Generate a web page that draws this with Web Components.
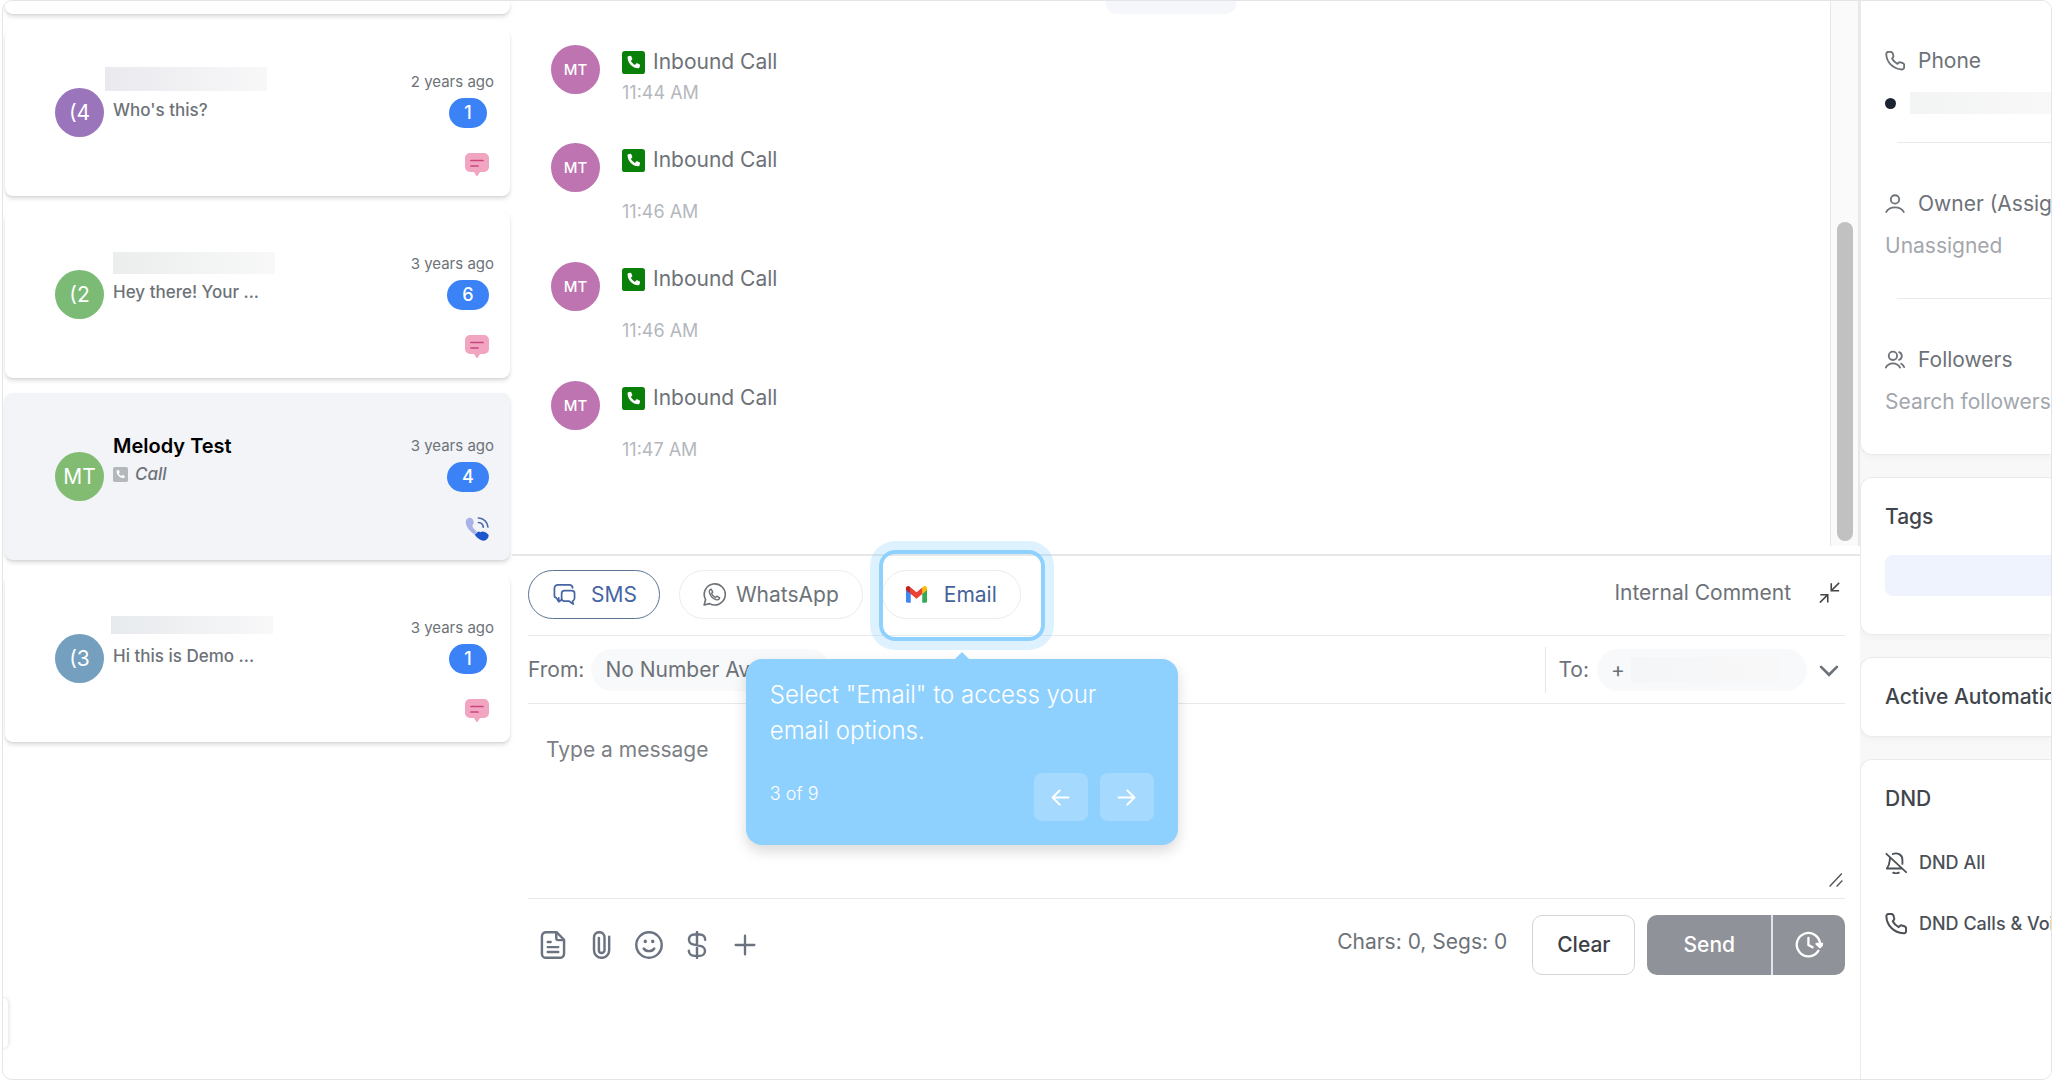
<!DOCTYPE html>
<html lang="en">
<head>
<meta charset="utf-8">
<title>Conversations</title>
<style>
  html, body {
    height: 100%;
    margin: 0;
  }

  body {
    background: #fff;
    color: #6d7278;
    font: 400 21px/28px Inter, "Liberation Sans", sans-serif;
    overflow: hidden;
  }
</style>
</head>
<body>

<inbox-shell>
  <conversation-list slot="list">
    <conversation-card blank></conversation-card>
    <conversation-card initials="(4" color="#9a75bb" age="2 years ago" count="1" channel="sms">
      <redacted-text slot="name" tint="#eae9ee" class="wide"></redacted-text>
      Who's this?
    </conversation-card>
    <conversation-card initials="(2" color="#7bbb76" age="3 years ago" count="6" channel="sms">
      <redacted-text slot="name" tint="#ebeeec"></redacted-text>
      Hey there! Your ...
    </conversation-card>
    <conversation-card selected initials="MT" color="#82bb72" age="3 years ago" count="4" channel="voice">
      <span slot="name">Melody Test</span>
      <ui-icon name="call-box" style="color:#b4b8bd"></ui-icon><em>Call</em>
    </conversation-card>
    <conversation-card initials="(3" color="#749fbe" age="3 years ago" count="1" channel="sms">
      <redacted-text slot="name" tint="#e7eaed" class="thin"></redacted-text>
      Hi this is Demo ...
    </conversation-card>
  </conversation-list>

  <message-thread slot="main">
    <call-message compact time="11:44 AM">Inbound Call</call-message>
    <call-message time="11:46 AM">Inbound Call</call-message>
    <call-message time="11:46 AM">Inbound Call</call-message>
    <call-message time="11:47 AM">Inbound Call</call-message>
  </message-thread>

  <message-composer slot="main">
    <channel-button slot="channels" active icon="sms">SMS</channel-button>
    <channel-button slot="channels" icon="whatsapp">WhatsApp</channel-button>
    <tour-step slot="channels" step="3 of 9">
      <channel-button icon="gmail" accent>Email</channel-button>
      <span slot="text">Select "Email" to access your email options.</span>
    </tour-step>
  </message-composer>

  <contact-panel slot="details"></contact-panel>
</inbox-shell>

<script>

const ICONS = {
  'chat-pink': `<svg viewBox="0 0 24 24"><path d="M5 0h14a5 5 0 0 1 5 5v9a5 5 0 0 1-5 5h-4l-2.200 3.500a1 1 0 0 1-1.600 0L9 19H5a5 5 0 0 1-5-5V5a5 5 0 0 1 5-5z" fill="#f2a5c1"/><path d="M6 7.500h12M6 13h7" stroke="#c9457f" stroke-width="1.700" stroke-linecap="round" fill="none"/></svg>`,
  'voice': `<svg viewBox="0 0 24 24" fill="none"><path d="M1.500 2.500C3 .3 6 0 7.300 1.800c1.500 2 2 4.200.700 5.700-1 1.200-.8 2.200.6 3.900l3.200 3.200-2 3.200C4.500 14.500-1.300 7.500 1.500 2.500z" fill="#a9b2e8"/><path d="M9.800 17.800l2.500-2.600c1-.9 2-.7 3 .1 2-1.600 5-.8 8.200 2.400.8 3.700-3.300 6.600-6.500 5.800-3-.8-5.200-2.900-7.200-5.700z" fill="#1f55cc"/><path d="M13.500 5.500c2.700.2 4.500 2 4.800 4.600M13.500 1c5.300.3 9 4 9.400 9" stroke="#4a68a8" stroke-width="1.700" stroke-linecap="round"/></svg>`,
  'call-box': `<svg viewBox="0 0 24 24"><rect width="24" height="24" rx="3" fill="currentColor"/><path d="M6.500 5.500l2-.6c.5-.1 1 .1 1.200.6l1 2.500c.2.400 0 .9-.3 1.200l-1.200 1.100c.9 1.900 2.200 3.200 4.300 4.200l1.100-1.300c.3-.3.8-.5 1.200-.3l2.400 1c.5.300.7.800.6 1.200l-.6 2.200c-.1.500-.5.700-1 .7C11 18 5.800 12.700 5.800 6.500c0-.5.300-.9.700-1z" fill="#fff"/></svg>`,
  'sms': `<svg viewBox="0 0 24 24" fill="none" stroke="currentColor" stroke-width="1.800" stroke-linejoin="round" stroke-linecap="round"><path d="M6 15.500v4l-2.500-4A2.500 2.500 0 0 1 1.500 13V5.500A3.500 3.500 0 0 1 5 2h12a3.500 3.500 0 0 1 3.500 3M6 19.500l3-2"/><path d="M12 8h7.500a3 3 0 0 1 3 3v5a3 3 0 0 1-2 2.800l.5 3.200-4-3H12a3 3 0 0 1-3-3v-5a3 3 0 0 1 3-3z"/></svg>`,
  'whatsapp': `<svg viewBox="0 0 24 24" fill="none" stroke="currentColor" stroke-width="1.700" stroke-linejoin="round"><path d="M1.200 23l1.500-5.700A11 11 0 1 1 6.900 21.500z"/><path d="M8.500 6.500c-1.500.3-2.200 1.700-1.800 3.500 1 3.700 3.800 6.400 7.300 7.500 1.800.4 3-.5 3.400-2l-3-1.800-1.400 1.500c-2-.9-3.300-2.300-4.100-4.300L10.200 9.500z" stroke-width="1.500"/></svg>`,
  'gmail': `<svg viewBox="0 0 24 24"><path d="M1 6v13a1.500 1.500 0 0 0 1.500 1.500H6V11z" fill="#4285f4"/><path d="M18 20.500h3.500A1.500 1.500 0 0 0 23 19V6l-5 5z" fill="#34a853"/><path d="M18 5v6.500l5-4.200V5.500c0-2-2-3.100-3.600-1.900z" fill="#fbbc04"/><path d="M6 11.500V4.800l6 4.900 6-4.900v6.700l-6 5z" fill="#ea4335"/><path d="M1 5.500v1.800l5 4.200V4.800L4.600 3.600C3 2.400 1 3.500 1 5.500z" fill="#c5221f"/></svg>`,
  'collapse': `<svg viewBox="0 0 24 24" fill="none" stroke="currentColor" stroke-width="1.800"><path d="M14 1.500V10h9M14.500 9.500L23 1M1.500 14.500H10v9M9.500 15L1 23.500"/></svg>`,
  'chevron': `<svg viewBox="0 0 24 24" fill="none" stroke="currentColor" stroke-width="3.200" stroke-linecap="round"><path d="M2.500 7L12 16.500 21.500 7"/></svg>`,
  'grip': `<svg viewBox="0 0 24 24" fill="none" stroke="currentColor" stroke-width="2.400"><path d="M1 23L22 1M13 23l10-10"/></svg>`,
  'doc': `<svg viewBox="0 0 24 24" fill="none" stroke="currentColor" stroke-width="2.100" stroke-linejoin="round" stroke-linecap="round"><path d="M15 1H6a3.500 3.500 0 0 0-3.500 3.500v15A3.500 3.500 0 0 0 6 23h12a3.500 3.500 0 0 0 3.500-3.500V7.500z"/><path d="M14.800 1.500V6a1.800 1.800 0 0 0 1.800 1.800H21M7.500 9.500h2.500M7.500 13.800h9M7.500 18h9"/></svg>`,
  'clip': `<svg viewBox="0 0 24 24" fill="none" stroke="currentColor" stroke-width="2.100" stroke-linecap="round"><path d="M19 5v11.500a6.500 6.500 0 0 1-13 0V5.500a4.500 4.500 0 0 1 9 0v11a2.400 2.400 0 0 1-4.800 0V6"/></svg>`,
  'smile': `<svg viewBox="0 0 24 24" fill="none" stroke="currentColor" stroke-width="2.100" stroke-linecap="round"><circle cx="12" cy="12" r="10.900"/><path d="M7.500 15c2 3 7 3 9 0"/><path d="M8.800 8.800v.2M15.200 8.800v.2" stroke-width="2.900"/></svg>`,
  'dollar': `<svg viewBox="0 0 24 24" fill="none" stroke="currentColor" stroke-width="2.100" stroke-linecap="round"><path d="M12 .8v22.400M19 7.500c0-2.700-2-4.500-4.500-4.500h-5a4.300 4.300 0 0 0-1 8.500l7 1.500a4.200 4.200 0 0 1-1 8.300H9.500A4.500 4.500 0 0 1 5 17"/></svg>`,
  'plus': `<svg viewBox="0 0 24 24" fill="none" stroke="currentColor" stroke-width="2" stroke-linecap="round"><path d="M12 4v16M4 12h16"/></svg>`,
  'clock': `<svg viewBox="0 0 24 24" fill="none" stroke="currentColor" stroke-width="2" stroke-linecap="round" stroke-linejoin="round"><path d="M20 17a10 10 0 1 1 1.500-5.500M11.500 6v6l3.500 2"/><path d="M18.500 11l3 2.800 2.300-2.800z" fill="currentColor"/></svg>`,
  'phone': `<svg viewBox="0 0 24 24" fill="none" stroke="currentColor" stroke-width="2.200" stroke-linejoin="round"><path d="M8.500 9c1.400 2.800 3.500 5 6.400 6.400l1.300-1.300c.7-.6 1.500-.8 2.400-.5l2.600.8c1.200.4 1.800 1.300 1.800 2.500v2.600c0 1.700-1.300 2.800-2.900 2.700C9.500 21.500 2 13.500 1.500 3.900 1.400 2.200 2.600 1 4.200 1h2.500c1.200 0 2.100.7 2.500 1.800l.8 2.600c.3.900.1 1.700-.5 2.300z"/></svg>`,
  'user': `<svg viewBox="0 0 24 24" fill="none" stroke="currentColor" stroke-width="2.200" stroke-linecap="round"><circle cx="12" cy="6.500" r="5"/><path d="M1.500 21.500c2-3.500 6-5.500 10.500-5.500s8.500 2 10.500 5.500"/></svg>`,
  'users': `<svg viewBox="0 0 24 24" fill="none" stroke="currentColor" stroke-width="2.200" stroke-linecap="round"><circle cx="9.500" cy="7" r="5"/><path d="M1 21c2-3.500 5-5 8.500-5s6.500 1.500 8.500 5M17 2.500a5 5 0 0 1 0 9.300M19.500 16.500c1.500.8 2.700 2.200 3.500 4"/></svg>`,
  'bell-off': `<svg viewBox="0 0 24 24" fill="none" stroke="currentColor" stroke-width="2" stroke-linecap="round" stroke-linejoin="round"><path d="M8.500 2.200C13 .2 19 2.500 19 8.500v4.500M5.500 6.500c-.8 4.500 0 7-3.500 11.500h15.500M9 22.500c1.800 1.200 4.200 1.200 6 0M1.500 2l21.500 20"/></svg>`,
  'left': `<svg viewBox="0 0 24 24" fill="none" stroke="currentColor" stroke-width="2.600" stroke-linecap="round" stroke-linejoin="round"><path d="M22 12H2.500M11 3l-9 9 9 9"/></svg>`,
  'right': `<svg viewBox="0 0 24 24" fill="none" stroke="currentColor" stroke-width="2.600" stroke-linecap="round" stroke-linejoin="round"><path d="M2 12h19.500M13 3l9 9-9 9"/></svg>`
};

class UiIcon extends HTMLElement {
  constructor() {
    super();
    this.attachShadow({mode: 'open'});
  }

  connectedCallback(){
    this.shadowRoot.innerHTML = `
      <style>
        :host { display: inline-block; flex: none; width: var(--icon-size, 24px); height: var(--icon-size, 24px); }
        svg { display: block; width: 100%; height: 100%; }
      </style>
      ${ICONS[this.getAttribute('name')]}`;
  }
}

customElements.define('ui-icon', UiIcon);


class RedactedText extends HTMLElement {
  constructor() {
    super();
    this.attachShadow({mode: 'open'}).innerHTML = `
      <style>
        :host { display: block; width: 162px; height: 22px; }
        :host(.wide) { height: 24px; margin: -3px 0 0 -8px; }
        :host(.thin) { height: 18px; margin-left: -2px; }
        div { height: 100%; background: linear-gradient(90deg, var(--tint), #f8f8f9); }
      </style>
      <div></div>`;
  }

  connectedCallback(){
    this.style.setProperty('--tint', this.getAttribute('tint'));
  }
}

customElements.define('redacted-text', RedactedText);


class InboxShell extends HTMLElement {
  constructor() {
    super();
    this.attachShadow({mode: 'open'}).innerHTML = `
      <style>
        :host {
          display: grid;
          grid-template-columns: 509px minmax(0, 1fr) 191px;
          box-sizing: border-box;
          height: 100vh;
          margin: 0 2px;
          border: 1px solid #e3e4e8;
          border-radius: 10px;
          overflow: hidden;
        }
        main { display: flex; flex-direction: column; min-height: 0; }
      </style>
      <slot name="list"></slot>
      <main><slot name="main"></slot></main>
      <slot name="details"></slot>`;
  }
}

customElements.define('inbox-shell', InboxShell);


class ConversationList extends HTMLElement {
  constructor() {
    super();
    this.attachShadow({mode: 'open'}).innerHTML = `
      <style>
        :host { display: flex; flex-direction: column; justify-content: space-between; padding: 0 2px 30px; min-height: 0; }
        nav { display: flex; flex-direction: column; gap: 15px; }
        .drawer { box-sizing: border-box; width: 6px; height: 52px; margin-left: -2px; border: 1px solid #eee; border-left: 0; border-radius: 0 6px 6px 0; box-shadow: 0 0 4px rgba(0,0,0,.1); background: #fff; padding: 0; }
      </style>
      <nav><slot></slot></nav>
      <button class="drawer" aria-label="Open menu"></button>`;
  }
}

customElements.define('conversation-list', ConversationList);


class ConversationCard extends HTMLElement {
  constructor() {
    super();
    this.attachShadow({mode: 'open'});
  }

  connectedCallback(){
    const style = `
      <style>
        :host {
          display: flex;
          box-sizing: border-box;
          height: 167px;
          padding: 41px 16px 0 50px;
          gap: 9px;
          border-radius: 8px;
          background: #fff;
          box-shadow: 0 3px 4px rgba(0,0,0,.12), 0 1px 2px rgba(0,0,0,.06);
        }
        :host([blank]) { height: 13px; border-radius: 0 0 8px 8px; padding: 0; }
        :host([selected]) { background: #f2f4f8; }
        .avatar {
          flex: none;
          width: 49px;
          height: 49px;
          margin-top: 18px;
          border-radius: 50%;
          color: #fff;
          font-size: 21px;
          line-height: 49px;
          text-align: center;
        }
        .text { flex: 1; min-width: 0; }
        .name { display: flex; align-items: flex-start; height: 24px; font-size: 20px; font-weight: 600; line-height: 24px; color: #000; }
        .preview {
          display: flex;
          align-items: center;
          gap: 7px;
          margin-top: 4px;
          font-size: 17px;
          font-weight: 500;
          line-height: 24px;
          --icon-size: 15px;
        }
        .meta { display: flex; flex-direction: column; align-items: flex-end; font-size: 15px; line-height: 24px; }
        .badge { display: flex; justify-content: center; width: 42px; margin: 4px 5px 0; }
        .count {
          padding: 0 15px;
          border-radius: 15px;
          background: #3b82f6;
          color: #fff;
          font-size: 18px;
          font-weight: 500;
          line-height: 30px;
        }
        .meta ui-icon { margin: 25px 5px 0; }
      </style>`;

    if (this.hasAttribute('blank')){
      this.shadowRoot.innerHTML = style;
      return;
    }

    const icon = this.getAttribute('channel') === 'voice' ? 'voice' : 'chat-pink';
    this.shadowRoot.innerHTML = `${style}
      <div class="avatar" style="background:${this.getAttribute('color')}">${this.getAttribute('initials')}</div>
      <div class="text">
        <div class="name"><slot name="name"></slot></div>
        <div class="preview"><slot></slot></div>
      </div>
      <div class="meta">
        <span>${this.getAttribute('age')}</span>
        <div class="badge"><span class="count">${this.getAttribute('count')}</span></div>
        <ui-icon name="${icon}"></ui-icon>
      </div>`;
  }
}

customElements.define('conversation-card', ConversationCard);


class MessageThread extends HTMLElement {
  constructor() {
    super();
    this.attachShadow({mode: 'open'}).innerHTML = `
      <style>
        :host { display: flex; flex: 1; min-height: 0; padding-bottom: 8px; }
        .messages { flex: 1; display: flex; flex-direction: column; gap: 38px; padding: 0 39px; }
        .date { align-self: center; width: 130px; height: 13px; margin-bottom: -7px; border-radius: 0 0 10px 10px; background: #f6f7fa; }
        .track {
          display: flex;
          box-sizing: border-box;
          width: 30px;
          padding: 221px 5px 5px 6px;
          border: solid #e8e8e8;
          border-width: 0 2px 0 1px;
          background: #fafafa;
        }
        .thumb { flex: 1; border-radius: 8px; background: #c1c1c1; }
      </style>
      <div class="messages"><div class="date"></div><slot></slot></div>
      <div class="track"><div class="thumb"></div></div>`;
  }
}

customElements.define('message-thread', MessageThread);


class CallMessage extends HTMLElement {
  constructor() {
    super();
    this.attachShadow({mode: 'open'});
  }

  connectedCallback(){
    this.shadowRoot.innerHTML = `
      <style>
        :host { display: flex; gap: 22px; }
        .avatar {
          width: 49px;
          height: 49px;
          border-radius: 50%;
          background: #bd74b1;
          color: #fff;
          font-size: 15px;
          font-weight: 500;
          line-height: 49px;
          text-align: center;
        }
        .body { display: flex; flex-direction: column; gap: 28px; padding-top: 5px; }
        :host([compact]) .body { gap: 7px; }
        .title { display: flex; align-items: center; gap: 8px; line-height: 24px; --icon-size: 23px; }
        .title ui-icon { color: #0a800a; }
        time { color: #b4b8bd; font-size: 18px; line-height: 24px; }
      </style>
      <div class="avatar">MT</div>
      <div class="body">
        <div class="title"><ui-icon name="call-box"></ui-icon><span><slot></slot></span></div>
        <time>${this.getAttribute('time')}</time>
      </div>`;
  }
}

customElements.define('call-message', CallMessage);


class ChannelButton extends HTMLElement {
  constructor() {
    super();
    this.attachShadow({mode: 'open'});
  }

  connectedCallback(){
    this.shadowRoot.innerHTML = `
      <style>
        :host { display: block; }
        button {
          display: flex;
          align-items: center;
          gap: 10px;
          height: 49px;
          padding: 0 23px;
          border: 1px solid #ebecef;
          border-radius: 25px;
          background: #fff;
          color: inherit;
          font: inherit;
          --icon-size: 23px;
        }
        :host([active]) button { border-color: #5b7595; color: #4566a3; gap: 15px; padding: 0 22px 0 24px; }
        :host([accent]) button { color: #46629b; gap: 16px; padding: 0 23px 0 22px; }
      </style>
      <button><ui-icon name="${this.getAttribute('icon')}"></ui-icon><slot></slot></button>`;
  }
}

customElements.define('channel-button', ChannelButton);


class TourStep extends HTMLElement {
  constructor() {
    super();
    this.attachShadow({mode: 'open'});
  }

  connectedCallback(){
    this.shadowRoot.innerHTML = `
      <style>
        :host { display: block; position: relative; z-index: 2; }
        .ring {
          position: absolute;
          inset: -20px -24px -22px -3px;
          box-sizing: border-box;
          border: 4px solid #8fd1fe;
          border-radius: 16px;
          box-shadow: 0 0 0 9px rgba(143,209,254,.3);
          pointer-events: none;
        }
        .tip {
          position: absolute;
          top: 105px;
          left: 50%;
          box-sizing: border-box;
          width: 432px;
          margin-left: -216px;
          padding: 18px 24px 24px;
          border-radius: 16px;
          background: #8fd1fe;
          color: #fff;
          font-size: 24px;
          font-weight: 300;
          line-height: 36px;
          box-shadow: 0 6px 14px rgba(0,0,0,.15);
          pointer-events: auto;
        }
        .tip::before {
          content: "";
          position: absolute;
          top: -7px;
          left: 50%;
          margin-left: -7px;
          border: solid transparent;
          border-width: 0 7px 7px;
          border-bottom-color: #8fd1fe;
        }
        footer { display: flex; align-items: center; gap: 12px; margin-top: 24px; font-size: 18px; --icon-size: 19px; }
        footer span { flex: 1; padding-bottom: 6px; }
        button {
          display: flex;
          align-items: center;
          justify-content: center;
          width: 54px;
          height: 48px;
          padding: 0;
          border: 0;
          border-radius: 8px;
          background: rgba(255,255,255,.2);
          color: #fff;
        }
      </style>
      <slot></slot>
      <div class="ring">
        <div class="tip">
          <slot name="text"></slot>
          <footer>
            <span>${this.getAttribute('step')}</span>
            <button aria-label="Previous"><ui-icon name="left"></ui-icon></button>
            <button aria-label="Next"><ui-icon name="right"></ui-icon></button>
          </footer>
        </div>
      </div>`;
  }
}

customElements.define('tour-step', TourStep);


class MessageComposer extends HTMLElement {
  constructor() {
    super();
    this.attachShadow({mode: 'open'}).innerHTML = `
      <style>
        :host { display: block; border-top: 2px solid #e6e7e9; padding: 0 15px 104px 16px; }
        button { padding: 0; border: 0; background: none; color: inherit; font: inherit; }
        .row { display: flex; align-items: center; border-bottom: 1px solid #e8e9eb; }
        .channels { height: 77px; gap: 19px; padding-bottom: 2px; }
        .channels .comment { margin: 0 9px 0 auto; padding-bottom: 4px; }
        .channels .collapse { height: 21px; margin: 0 5px 4px 0; color: #444; --icon-size: 21px; }
        .numbers { height: 67px; gap: 7px; }
        .pill { box-sizing: border-box; height: 42px; border-radius: 21px; background: #f8f9fb; padding: 0 16px 0 14px; }
        .to {
          display: flex;
          align-items: center;
          gap: 8px;
          height: 46px;
          margin-left: auto;
          padding: 0 6px 0 12px;
          border-left: 1px solid #e6e7e9;
          --icon-size: 20px;
        }
        .to .pill { display: flex; align-items: center; gap: 6px; width: 210px; margin-right: 4px; }
        .to redacted-text { width: 150px; height: 26px; }
        .to button { height: 20px; }
        .message { position: relative; border-bottom: 1px solid #e8e9eb; }
        textarea {
          display: block;
          box-sizing: border-box;
          width: 100%;
          height: 194px;
          padding: 32px 18px;
          border: 0;
          outline: 0;
          background: none;
          color: inherit;
          font: inherit;
          resize: none;
        }
        textarea::placeholder { color: #7c7f84; opacity: 1; }
        .message ui-icon { position: absolute; right: 2px; bottom: 11px; --icon-size: 14px; color: #555; }
        .tools { display: flex; align-items: center; padding: 16px 0 0 11px; gap: 20px; }
        .tools .tool { height: 28px; color: #6b7280; --icon-size: 28px; }
        .tools .count { margin: 0 5px 6px auto; }
        .clear {
          box-sizing: border-box;
          height: 60px;
          padding: 0 24px;
          border: 1px solid #d3d5da;
          border-radius: 10px;
          color: #3c4147;
          font-weight: 500;
        }
        .send { display: flex; margin-left: -8px; border-radius: 10px; overflow: hidden; background: #8f9399; color: #fff; --icon-size: 28px; }
        .send button { display: flex; align-items: center; height: 60px; padding: 0 36px; font-weight: 500; }
        .send button + button { padding: 0 22px; border-left: 2px solid #dde6f1; }
      </style>
      <div class="row channels">
        <slot name="channels"></slot>
        <button class="comment">Internal Comment</button>
        <button class="collapse" aria-label="Collapse"><ui-icon name="collapse"></ui-icon></button>
      </div>
      <div class="row numbers">
        <span>From:</span>
        <button class="pill">No Number Available</button>
        <div class="to">
          <span>To:</span>
          <div class="pill"><span>+</span><redacted-text tint="#f5f6f7"></redacted-text></div>
          <button aria-label="Choose number"><ui-icon name="chevron"></ui-icon></button>
        </div>
      </div>
      <div class="message">
        <textarea placeholder="Type a message" aria-label="Message"></textarea>
        <ui-icon name="grip"></ui-icon>
      </div>
      <div class="tools">
        <button class="tool" aria-label="Templates"><ui-icon name="doc"></ui-icon></button>
        <button class="tool" aria-label="Attach"><ui-icon name="clip"></ui-icon></button>
        <button class="tool" aria-label="Emoji"><ui-icon name="smile"></ui-icon></button>
        <button class="tool" aria-label="Request payment"><ui-icon name="dollar"></ui-icon></button>
        <button class="tool" aria-label="More"><ui-icon name="plus"></ui-icon></button>
        <span class="count">Chars: 0, Segs: 0</span>
        <button class="clear">Clear</button>
        <div class="send">
          <button>Send</button>
          <button aria-label="Schedule"><ui-icon name="clock"></ui-icon></button>
        </div>
      </div>`;
  }
}

customElements.define('message-composer', MessageComposer);


class ContactPanel extends HTMLElement {
  constructor() {
    super();
    this.attachShadow({mode: 'open'}).innerHTML = `
      <style>
        :host {
          display: flex;
          flex-direction: column;
          gap: 22px;
          min-height: 0;
          overflow: hidden;
          background: #f8f8f9;
          white-space: nowrap;
        }
        section {
          flex: none;
          box-sizing: border-box;
          padding: 25px 0 25px 24px;
          border: 1px solid #ebebed;
          border-right: 0;
          border-radius: 12px 0 0 12px;
          background: #fff;
          box-shadow: 0 3px 6px rgba(0,0,0,.03);
        }
        .contact { padding: 46px 0 0 24px; border-top: 0; border-radius: 0 0 0 12px; }
        .field { padding-bottom: 38px; }
        .phone { padding-bottom: 25px; }
        hr + .field { padding-top: 47px; }
        .label, .value, .dnd { display: flex; align-items: center; --icon-size: 20px; }
        .label { gap: 13px; }
        .value { height: 28px; margin-top: 14px; color: #a3a7ad; }
        .value redacted-text { width: 100%; margin-left: 14px; }
        .value i { flex: none; width: 11px; height: 11px; border-radius: 50%; background: #1c2434; }
        hr { height: 1px; margin: 0 0 0 12px; border: 0; background: #e9eaec; }
        input { width: 100%; padding: 0; border: 0; outline: 0; background: none; font: inherit; }
        input::placeholder { color: #a3a7ad; opacity: 1; }
        h2 { margin: 0; color: #40454c; font-size: 21px; font-weight: 500; line-height: 28px; }
        .tags { margin-top: 24px; margin-bottom: 13px; height: 41px; border-radius: 8px 0 0 8px; background: #eff3fe; }
        .last { flex: 1; border-bottom: 0; border-bottom-left-radius: 0; }
        .dnd { gap: 12px; margin-top: 33px; color: #4b5157; font-size: 18px; font-weight: 500; --icon-size: 22px; }
        h2 + .dnd { margin-top: 36px; }
      </style>
      <section class="contact">
        <div class="field phone">
          <div class="label"><ui-icon name="phone"></ui-icon>Phone</div>
          <div class="value"><i></i><redacted-text tint="#f3f4f4"></redacted-text></div>
        </div>
        <hr>
        <div class="field">
          <div class="label"><ui-icon name="user"></ui-icon>Owner (Assigned to)</div>
          <div class="value">Unassigned</div>
        </div>
        <hr>
        <div class="field">
          <label class="label" for="followers"><ui-icon name="users"></ui-icon>Followers</label>
          <div class="value"><input id="followers" placeholder="Search followers"></div>
        </div>
      </section>
      <section>
        <h2>Tags</h2>
        <div class="tags"></div>
      </section>
      <section>
        <h2>Active Automations</h2>
      </section>
      <section class="last">
        <h2>DND</h2>
        <div class="dnd"><ui-icon name="bell-off"></ui-icon>DND All</div>
        <div class="dnd"><ui-icon name="phone"></ui-icon>DND Calls &amp; Voicemails</div>
      </section>`;
  }
}

customElements.define('contact-panel', ContactPanel);

</script>
</body>
</html>
